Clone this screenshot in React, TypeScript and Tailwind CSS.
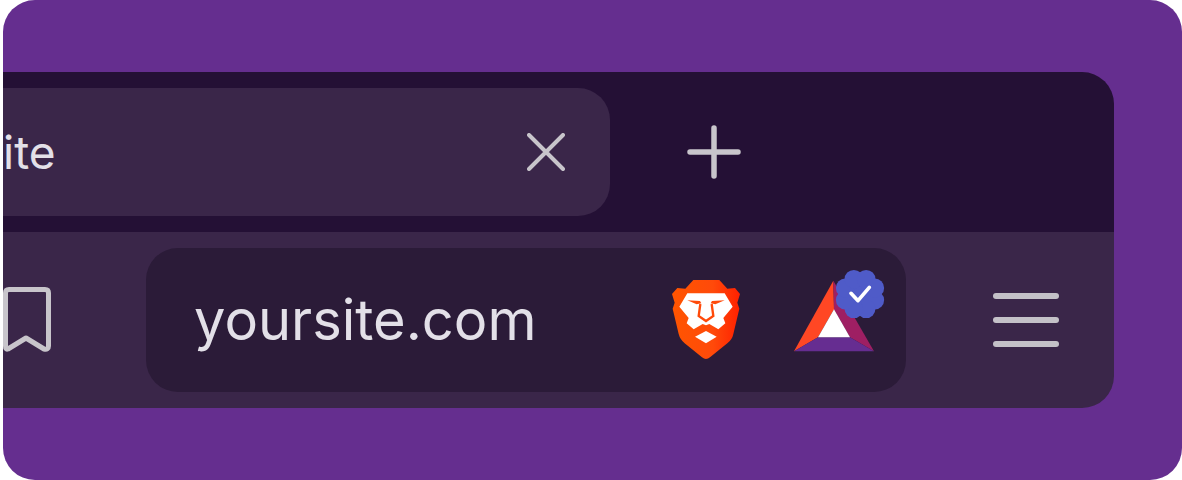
const scallops = [0, 45, 90, 135, 180, 225, 270, 315];

function BraveLogo() {
  return (
    <svg viewBox="0 0 330 330" className="h-[110px] w-[110px]">
      <defs>
        <linearGradient id="brave" x1="0" y1="0" x2="1" y2="0">
          <stop offset="0" stopColor="#ff5500" />
          <stop offset="0.6" stopColor="#ff4a0a" />
          <stop offset="1" stopColor="#ff2000" />
        </linearGradient>
      </defs>
      <path
        d="M130 60 L208 60 L232 86 L255 84 L270 102 L262 128 L268 146 L250 222 Q247 238 232 250 L180 292 Q168 302 156 292 L104 250 Q90 238 86 222 L68 146 L74 128 L66 102 L82 84 L106 86 Z"
        fill="url(#brave)"
      />
      <path
        d="M112 100 L224 100 L248 140 L220 174 L226 190 L205 208 L178 192 L168 196 L158 192 L131 208 L110 190 L116 174 L88 140 Z"
        fill="#fff"
      />
      <path d="M112 121 L150 123 L154 130 L140 133 Z" fill="#ff4a0a" />
      <path d="M224 121 L186 123 L182 130 L196 133 Z" fill="#ff4a0a" />
      <path d="M151 132 L146 168 L168 183 L190 168 L185 132" fill="none" stroke="#ff4a0a" strokeWidth="7" />
      <path d="M135 230 L168 213 L200 230 L168 250 Z" fill="#fff" />
    </svg>
  );
}

function BatLogo() {
  return (
    <svg viewBox="0 0 360 330" className="h-[110px] w-[120px]">
      <path d="M160 62 L42 274 L114 232 L162 148 Z" fill="#ff4724" />
      <path d="M160 62 L282 274 L210 232 L162 148 Z" fill="#9e1f63" />
      <path d="M42 274 L282 274 L210 232 L114 232 Z" fill="#662d91" />
      <path d="M162 148 L210 232 L114 232 Z" fill="#fff" />
      <circle cx="240" cy="102" r="52" fill="#4f5bc8" />
      {scallops.map((deg) => (
        <circle
          key={deg}
          cx={240 + 48 * Math.cos(((deg + 22.5) * Math.PI) / 180)}
          cy={102 + 48 * Math.sin(((deg + 22.5) * Math.PI) / 180)}
          r="28"
          fill="#4f5bc8"
        />
      ))}
      <path d="M213 100 L234 122 L268 82" fill="none" stroke="#fff" strokeWidth="11" strokeLinecap="round" strokeLinejoin="round" />
    </svg>
  );
}

export default function App() {
  return (
    <div className="h-[480px] w-[1182px] bg-white pl-[3px] font-['Inter',sans-serif]">
      <div className="h-full overflow-hidden rounded-[32px] bg-[#652e8f] pt-[72px] pr-[68px]">
        <div className="overflow-hidden rounded-r-[32px]">
          {/* tab strip */}
          <div className="flex h-[160px] items-center bg-[#241035]">
            <div className="flex h-[128px] w-[607px] items-center justify-between rounded-r-[32px] bg-[#3a2649] pr-[45px] text-[46px] text-[#e3e0e8]">
              <span>ite</span>
              <svg viewBox="0 0 38 38" className="h-[38px] w-[38px]">
                <path d="M2 2 L36 36 M36 2 L2 36" stroke="#c8c5cb" strokeWidth="4" strokeLinecap="round" />
              </svg>
            </div>
            <svg viewBox="0 0 54 54" className="ml-[77px] h-[54px] w-[54px]">
              <path d="M27 3 V51 M3 27 H51" stroke="#c8c5cb" strokeWidth="5.5" strokeLinecap="round" />
            </svg>
          </div>
          {/* toolbar */}
          <div className="flex h-[176px] items-center bg-[#3a2649]">
            <svg viewBox="0 0 48 66" className="h-[66px] w-[48px] shrink-0">
              <path
                d="M2.5 6 Q2.5 2.5 6 2.5 H42 Q45.5 2.5 45.5 6 V59 Q45.5 63 41 62 L23 51 L5 62 Q2.5 63 2.5 59 Z"
                fill="none"
                stroke="#c8c5cb"
                strokeWidth="5"
                strokeLinejoin="round"
              />
            </svg>
            <div className="ml-[95px] flex h-[144px] w-[760px] items-center rounded-[32px] bg-[#2b1b38] pl-[48px]">
              <span className="w-[456px] text-[56px] text-[#e3e0e8]">yoursite.com</span>
              <div className="mb-[10px]">
                <BraveLogo />
              </div>
              <div className="mb-[10px] ml-[20px]">
                <BatLogo />
              </div>
            </div>
            <div className="ml-[87px] flex w-[66px] flex-col gap-[18px]">
              <div className="h-[6px] rounded-full bg-[#c4c1c8]" />
              <div className="h-[6px] rounded-full bg-[#c4c1c8]" />
              <div className="h-[6px] rounded-full bg-[#c4c1c8]" />
            </div>
          </div>
        </div>
      </div>
    </div>
  );
}
